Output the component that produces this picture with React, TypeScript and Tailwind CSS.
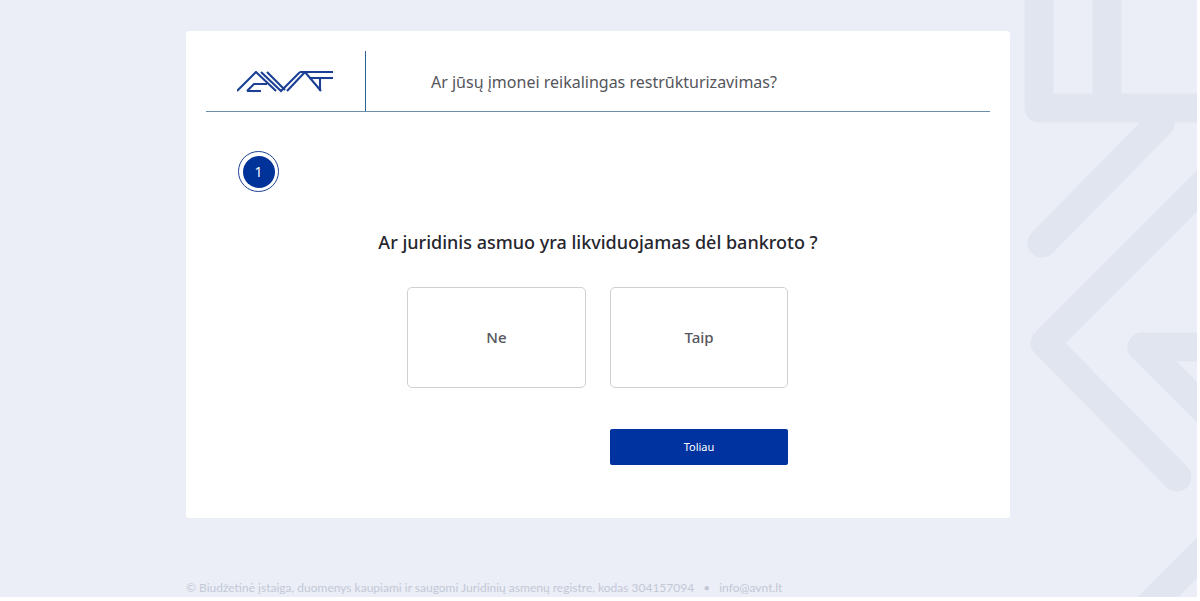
const font = { fontFamily: '"Noto Sans", "Open Sans", sans-serif' };

const BackgroundMark = () => (
  <svg className="absolute inset-0" width="1197" height="597" viewBox="0 0 1197 597" fill="none">
    <g stroke="#e1e5ef" strokeWidth="29" strokeLinejoin="round" strokeLinecap="round">
      <path d="M1039 -20 V108 H1210" />
      <path d="M1107 -20 V108" strokeLinecap="butt" />
      <path d="M1042 243 L1160 123" />
      <path d="M1210 178 L1045 343 L1177 477" />
      <path d="M1142 347 H1210" />
      <path d="M1142 347 L1220 425" />
      <path d="M1220 535 L1140 615" strokeLinecap="butt" />
    </g>
  </svg>
);

const Logo = () => (
  <svg width="96" height="22" viewBox="0 0 96 22" fill="none" stroke="#1a3f94" strokeWidth="2.1">
    <path d="M0 20 L19 1 L39 20" />
    <path d="M10 20 L17 13 H30" />
    <path d="M10 20 H24" />
    <path d="M24 1 L44 20 L63 1" />
    <path d="M30 1 L48 19" />
    <path d="M50 20 L68 1 L84 20" />
    <path d="M63 1 H96" />
    <path d="M72 7 H96" />
    <path d="M83 7 V20" />
  </svg>
);

export default function App() {
  return (
    <div className="w-[1197px] h-[597px] bg-[#ebeef7] relative overflow-hidden" style={font}>
      <BackgroundMark />
      <div className="relative pt-[31px] pl-[186px]">
        <div className="w-[824px] h-[487px] bg-white rounded-[3px] px-5 pt-5">
          <div className="flex h-[61px] border-b border-[#6d8ea8]">
            <div className="w-[160px] h-full border-r border-[#2f6291] flex items-center pl-[31px] pt-[1px]">
              <Logo />
            </div>
            <div className="pl-[65px] pt-5 text-[16px] leading-[22px] text-[#55555c]">
              Ar jūsų įmonei reikalingas restrūkturizavimas?
            </div>
          </div>
          <div className="pt-[39px] pl-[32px]">
            <div className="w-[41px] h-[41px] rounded-full border border-[#1a3f94] flex items-center justify-center">
              <div className="w-[32px] h-[32px] rounded-full bg-[#003399] text-white text-sm flex items-center justify-center">
                1
              </div>
            </div>
          </div>
          <h1 className="mt-[37px] text-center text-[18px] leading-[26px] font-medium text-[#26262e]">
            Ar juridinis asmuo yra likviduojamas dėl bankroto ?
          </h1>
          <div className="mt-[32px] pl-[201px] flex gap-6">
            <button className="w-[179px] h-[101px] rounded-[5px] border border-[#cfcfd4] bg-white text-[15px] font-medium text-[#55555c]">
              Ne
            </button>
            <button className="w-[178px] h-[101px] rounded-[5px] border border-[#cfcfd4] bg-white text-[15px] font-medium text-[#55555c]">
              Taip
            </button>
          </div>
          <div className="mt-[41px] pl-[404px]">
            <button className="w-[178px] h-[36px] rounded-[2px] bg-[#0033a0] text-white text-[11px]">Toliau</button>
          </div>
        </div>
        <p
          className="mt-[62px] text-xs leading-4 text-[#c3c8d6] flex gap-[9px]"
          style={{ fontFamily: 'Lato, "Noto Sans", sans-serif' }}
        >
          <span>© Biudžetinė įstaiga, duomenys kaupiami ir saugomi Juridinių asmenų registre, kodas 304157094</span>
          <span>•</span>
          <span>info@avnt.lt</span>
        </p>
      </div>
    </div>
  );
}
